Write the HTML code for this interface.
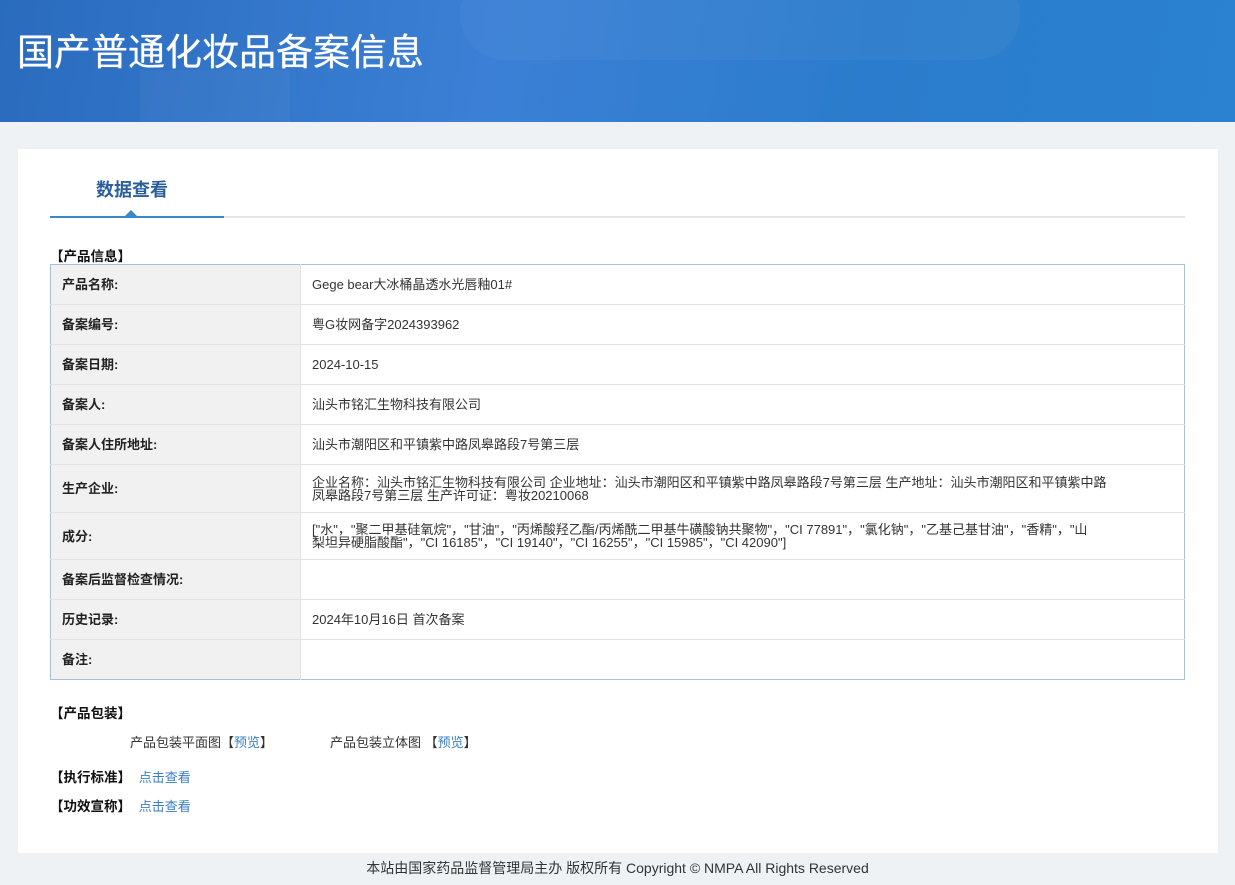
<!DOCTYPE html>
<html><head><meta charset="utf-8"><style>
*{margin:0;padding:0;box-sizing:border-box}
body{width:1235px;height:885px;background:#eef2f5;font-family:"Liberation Sans","Noto Sans CJK SC",sans-serif;font-size:13px;color:#333;position:relative;overflow:hidden}
.hdr{height:122px;background:linear-gradient(100deg,#2a6bbd 0%,#3b80d6 40%,#2b7ccc 70%,#2a82d0 100%);position:relative;overflow:hidden}
.hdr h1{position:absolute;left:17px;top:22px;color:#fff;font-size:37px;font-weight:normal;font-family:"Noto Sans CJK SC",sans-serif;text-shadow:0 0 0.6px #fff}
.blob{position:absolute;border-radius:50%;background:rgba(255,255,255,0.035)}
.main{position:absolute;left:18px;top:149px;width:1200px;height:704px;background:#fff}
.tab{position:absolute;left:78px;top:27px;font-size:18px;font-weight:bold;color:#2a5f9a}
.line{position:absolute;left:32px;top:67px;width:1135px;height:2px;background:#e4e6e8}
.line2{position:absolute;left:32px;top:67px;width:174px;height:2px;background:#3a88c8}
.tri{position:absolute;left:107px;top:61px;width:0;height:0;border-left:6px solid transparent;border-right:6px solid transparent;border-bottom:6px solid #3a88c8}
.sec{position:absolute;left:32px;font-weight:bold;font-size:13.5px;color:#111}
table{position:absolute;left:32px;top:115px;width:1135px;border-collapse:collapse;border:1px solid #a9c0d8}
td{border-bottom:1px solid #e3e3e3;padding:0 11px;font-size:13px;line-height:13px;vertical-align:middle}
td.l{width:250px;background:#f1f1f1;font-weight:bold;color:#222;border-right:1px solid #e3e3e3}
a{color:#3a7fc1;text-decoration:none}
.foot{position:absolute;top:858px;width:100%;text-align:center;font-size:14px;color:#333}
</style></head><body>
<div class="hdr">
<div class="blob" style="left:460px;top:-30px;width:560px;height:90px;border-radius:45px"></div>
<div class="blob" style="left:140px;top:70px;width:150px;height:80px;border-radius:0"></div>
<h1>国产普通化妆品备案信息</h1>
</div>
<div class="main">
<div class="tab">数据查看</div>
<div class="line"></div><div class="line2"></div><div class="tri"></div>
<div class="sec" style="top:96px">【产品信息】</div>
<table>
<tr style="height:40px"><td class="l">产品名称:</td><td>Gege bear大冰桶晶透水光唇釉01#</td></tr>
<tr style="height:40px"><td class="l">备案编号:</td><td>粤G妆网备字2024393962</td></tr>
<tr style="height:40px"><td class="l">备案日期:</td><td>2024-10-15</td></tr>
<tr style="height:40px"><td class="l">备案人:</td><td>汕头市铭汇生物科技有限公司</td></tr>
<tr style="height:40px"><td class="l">备案人住所地址:</td><td>汕头市潮阳区和平镇紫中路凤皋路段7号第三层</td></tr>
<tr style="height:48px"><td class="l">生产企业:</td><td>企业名称：汕头市铭汇生物科技有限公司 企业地址：汕头市潮阳区和平镇紫中路凤皋路段7号第三层 生产地址：汕头市潮阳区和平镇紫中路<br>凤皋路段7号第三层 生产许可证：粤妆20210068</td></tr>
<tr style="height:47px"><td class="l">成分:</td><td>["水"，"聚二甲基硅氧烷"，"甘油"，"丙烯酸羟乙酯/丙烯酰二甲基牛磺酸钠共聚物"，"CI 77891"，"氯化钠"，"乙基己基甘油"，"香精"，"山<br>梨坦异硬脂酸酯"，"CI 16185"，"CI 19140"，"CI 16255"，"CI 15985"，"CI 42090"]</td></tr>
<tr style="height:40px"><td class="l">备案后监督检查情况:</td><td></td></tr>
<tr style="height:40px"><td class="l">历史记录:</td><td>2024年10月16日 首次备案</td></tr>
<tr style="height:40px"><td class="l" style="border-bottom:none">备注:</td><td style="border-bottom:none"></td></tr>
</table>
<div class="sec" style="top:553px">【产品包装】</div>
<div style="position:absolute;left:112px;top:583px">产品包装平面图【<a>预览</a>】</div>
<div style="position:absolute;left:312px;top:583px">产品包装立体图 【<a>预览</a>】</div>
<div class="sec" style="top:617px">【执行标准】 <a style="font-weight:normal;font-size:13px;margin-left:4px">点击查看</a></div>
<div class="sec" style="top:646px">【功效宣称】 <a style="font-weight:normal;font-size:13px;margin-left:4px">点击查看</a></div>
</div>
<div class="foot">本站由国家药品监督管理局主办 版权所有 Copyright © NMPA All Rights Reserved</div>
</body></html>
